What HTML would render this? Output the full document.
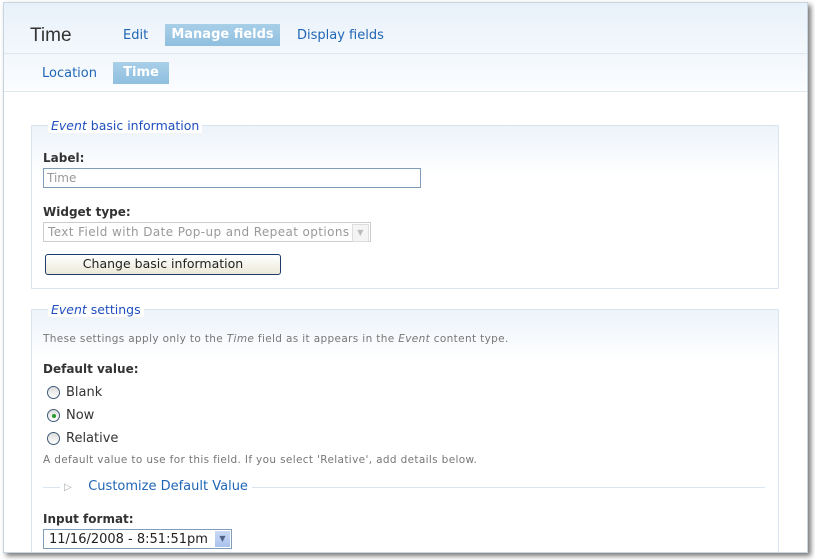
<!DOCTYPE html>
<html><head><style>
body{margin:0;width:815px;height:560px;background:#fff;position:relative;overflow:hidden;font-family:"DejaVu Sans","Liberation Sans",sans-serif;}
.page{position:absolute;left:3px;top:2px;width:803px;height:549px;background:#fff;border:1px solid #c9d5e0;box-shadow:3px 3px 5px #777;overflow:hidden}
.in{position:absolute;left:0;top:0;width:805px;height:551px}
.hdr{position:absolute;left:0;top:0;width:805px;height:50px;background:linear-gradient(#e8f1fa,#f4f8fc);border-bottom:1px solid #dde8f1}
.sub{position:absolute;left:0;top:51px;width:805px;height:37px;background:linear-gradient(#f2f7fc,#fbfdff);border-bottom:1px solid #dde8f1}
.a{position:absolute;color:#1f66b5;font-size:13px}
.tab{position:absolute;background:linear-gradient(#a9cfe8,#8fbfdf);color:#fff;font-weight:bold;font-size:13px;text-align:center}
.fs{position:absolute;left:27px;width:746px;border:1px solid #d9e5f0;background:linear-gradient(#edf3fa,#fff 50px)}
.leg{position:absolute;background:#fff;padding:0 3px;color:#1f4fbf;font-size:12.5px}
.lbl{position:absolute;font-weight:bold;font-size:12px;color:#333}
.r{position:absolute;width:11px;height:11px;border:1px solid #3e5a78;border-radius:50%;background:linear-gradient(#ddd,#fff)}
.rt{position:absolute;font-size:13px;color:#333}
.small{position:absolute;font-size:10.5px;color:#777;letter-spacing:0.35px}
</style></head><body>
<div class="page"><div class="in">
<div class="hdr"></div><div class="sub"></div>
<div style="position:absolute;left:26px;top:22px;font-size:19px;color:#333;font-family:'Liberation Sans',sans-serif">Time</div>
<div class="a" style="left:119px;top:25px">Edit</div>
<div class="tab" style="left:161px;top:21px;width:115px;height:22px;line-height:22px">Manage fields</div>
<div class="a" style="left:293px;top:25px">Display fields</div>
<div class="a" style="left:38px;top:63px">Location</div>
<div class="tab" style="left:109px;top:59px;width:56px;height:22px;line-height:22px">Time</div>

<div class="fs" style="top:122px;height:162px"></div>
<div class="leg" style="left:44px;top:115px"><i>Event</i> basic information</div>
<div class="lbl" style="left:39px;top:148px">Label:</div>
<div style="position:absolute;left:39px;top:165px;font-size:12px;color:#999;line-height:19px;padding-left:3px;box-sizing:border-box;width:378px;height:20px;border:1px solid #7f9db9">Time</div>
<div class="lbl" style="left:39px;top:202px">Widget type:</div>
<div style="position:absolute;left:39px;top:219px;width:328px;height:20px;border:1px solid #ccc;font-size:12px;letter-spacing:0.4px;color:#999;line-height:19px;padding-left:4px;box-sizing:border-box">Text Field with Date Pop-up and Repeat options<span style="position:absolute;right:1px;top:1px;width:15px;height:16px;border:1px solid #ddd;background:#f4f4f4;font-size:8px;color:#bbb;text-align:center;line-height:16px">▼</span></div>
<div style="position:absolute;left:41px;top:251px;width:234px;height:19px;border:1px solid #1c3d6a;border-radius:3px;background:linear-gradient(#fff,#ece9d8);font-size:12.5px;color:#222;text-align:center;line-height:18px">Change basic information</div>

<div class="fs" style="top:306px;height:260px"></div>
<div class="leg" style="left:44px;top:299px"><i>Event</i> settings</div>
<div class="small" style="left:39px;top:330px">These settings apply only to the <i>Time</i> field as it appears in the <i>Event</i> content type.</div>
<div class="lbl" style="left:39px;top:359px">Default value:</div>
<div class="r" style="left:43px;top:383px"></div><div class="rt" style="left:62px;top:382px">Blank</div>
<div class="r" style="left:43px;top:406px"><div style="position:absolute;left:4px;top:4px;width:4px;height:4px;border-radius:50%;background:#2a9a2a"></div></div><div class="rt" style="left:62px;top:405px">Now</div>
<div class="r" style="left:43px;top:429px"></div><div class="rt" style="left:62px;top:428px">Relative</div>
<div class="small" style="left:39px;top:451px">A default value to use for this field. If you select 'Relative', add details below.</div>
<div style="position:absolute;left:39px;top:484px;width:722px;height:1px;background:#d9e5f0"></div>
<div style="position:absolute;left:56px;top:476px;background:#fff;padding:0 4px;font-size:13px;color:#1f66b5"><span style="color:#aaa;font-size:10px">▷</span>&nbsp;&nbsp;&nbsp;&nbsp;Customize Default Value</div>
<div class="lbl" style="left:39px;top:509px">Input format:</div>
<div style="position:absolute;left:39px;top:526px;width:189px;height:20px;border:1px solid #7f9db9;font-size:13px;color:#222;line-height:19px;padding-left:5px;box-sizing:border-box">11/16/2008 - 8:51:51pm<span style="position:absolute;right:1px;top:1px;width:15px;height:16px;background:linear-gradient(#c9d9f5,#a9c2ec);font-size:8px;color:#4d6185;text-align:center;line-height:16px">▼</span></div>
</div></div>
</body></html>
